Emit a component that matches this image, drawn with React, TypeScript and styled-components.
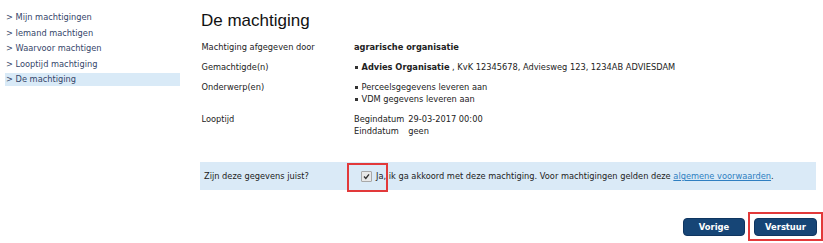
import React from 'react';
import styled, { createGlobalStyle } from 'styled-components';

const GlobalStyle = createGlobalStyle`
  html, body {
    margin: 0;
    padding: 0;
    background: #ffffff;
  }
  body {
    font-family: 'DejaVu Sans', Verdana, sans-serif;
    font-size: 8.25px;
    color: #222222;
  }
`;

const Page = styled.div`
  display: flex;
  width: 823px;
  height: 243px;
  overflow: hidden;
`;

const Sidebar = styled.nav`
  width: 175px;
  margin-left: 5px;
  padding-top: 11px;
  display: flex;
  flex-direction: column;
  gap: 2.5px;
`;

const NavItem = styled.a<{ $active?: boolean }>`
  display: block;
  height: 13px;
  line-height: 13px;
  padding-left: 1px;
  color: #35466a;
  text-decoration: none;
  background: ${(p) => (p.$active ? '#d9eaf7' : 'transparent')};
`;

const Main = styled.main`
  width: 616px;
  margin-left: 20px;
  padding-top: 11px;
  display: flex;
  flex-direction: column;
`;

const Title = styled.h1`
  margin: 0 0 6px 1px;
  font-family: 'Liberation Sans', Arial, sans-serif;
  font-weight: normal;
  font-size: 17px;
  line-height: 20px;
  color: #111111;
`;

const Row = styled.div`
  display: grid;
  grid-template-columns: 152.5px 1fr;
  padding: 4px 0 4px 1.5px;
  line-height: 12px;
`;

const Label = styled.div``;

const Value = styled.div``;

const Strong = styled.strong`
  font-weight: bold;
`;

const BulletList = styled.ul`
  margin: 0;
  padding: 0;
  list-style: none;
`;

const Bullet = styled.li`
  display: flex;
  align-items: center;
  &::before {
    content: '';
    width: 2.5px;
    height: 2.5px;
    background: #333333;
    margin: 1px 4px 0 1px;
    flex-shrink: 0;
  }
`;

const Period = styled.div`
  display: grid;
  grid-template-columns: auto auto;
  justify-content: start;
  column-gap: 4px;
`;

const ConfirmBand = styled.div`
  position: relative;
  margin-top: 21px;
  height: 28px;
  display: flex;
  align-items: center;
  padding: 0 4px;
  background: #daeaf7;
`;

const BandLabel = styled.div`
  width: 150px;
`;

const CheckLabel = styled.label`
  display: flex;
  align-items: center;
  margin-left: 7px;
`;

const CheckBox = styled.span`
  width: 9px;
  height: 9px;
  border: 1px solid #a8a8a8;
  border-radius: 1px;
  background: #e8e8e8;
  display: flex;
  align-items: center;
  justify-content: center;
  margin-right: 4px;
`;

const Link = styled.a`
  color: #2f7fc1;
  text-decoration: underline;
`;

const Highlight = styled.span<{ $left: number; $top: number; $w: number; $h: number }>`
  position: absolute;
  left: ${(p) => p.$left}px;
  top: ${(p) => p.$top}px;
  width: ${(p) => p.$w}px;
  height: ${(p) => p.$h}px;
  box-sizing: border-box;
  border: 2px solid #e2393a;
  pointer-events: none;
`;

const Actions = styled.div`
  display: flex;
  justify-content: flex-end;
  gap: 9px;
  margin-top: 28px;
  margin-right: -1px;
`;

const Button = styled.button<{ $marked?: boolean }>`
  position: relative;
  width: ${(p) => (p.$marked ? 63 : 62)}px;
  height: 18px;
  padding: 0;
  border: 1px solid #0f3560;
  border-radius: 4px;
  background: #164576;
  color: #ffffff;
  font-family: 'DejaVu Sans', Verdana, sans-serif;
  font-weight: bold;
  font-size: 8.4px;
  cursor: pointer;
  &::after {
    content: '';
    display: ${(p) => (p.$marked ? 'block' : 'none')};
    position: absolute;
    left: -7px;
    right: -7px;
    top: -7px;
    bottom: -6px;
    border: 2px solid #e2393a;
  }
`;

const navItems = [
  'Mijn machtigingen',
  'Iemand machtigen',
  'Waarvoor machtigen',
  'Looptijd machtiging',
  'De machtiging',
];

export default function App() {
  return (
    <Page>
      <GlobalStyle />
      <Sidebar>
        {navItems.map((item, i) => (
          <NavItem key={item} href="#" $active={i === navItems.length - 1}>
            &gt; {item}
          </NavItem>
        ))}
      </Sidebar>
      <Main>
        <Title>De machtiging</Title>
        <Row>
          <Label>Machtiging afgegeven door</Label>
          <Value>
            <Strong>agrarische organisatie</Strong>
          </Value>
        </Row>
        <Row>
          <Label>Gemachtigde(n)</Label>
          <Value>
            <BulletList>
              <Bullet>
                <span>
                  <Strong>Advies Organisatie</Strong> , KvK 12345678, Adviesweg 123, 1234AB ADVIESDAM
                </span>
              </Bullet>
            </BulletList>
          </Value>
        </Row>
        <Row>
          <Label>Onderwerp(en)</Label>
          <Value>
            <BulletList>
              <Bullet>Perceelsgegevens leveren aan</Bullet>
              <Bullet>VDM gegevens leveren aan</Bullet>
            </BulletList>
          </Value>
        </Row>
        <Row>
          <Label>Looptijd</Label>
          <Value>
            <Period>
              <span>Begindatum</span>
              <span>29-03-2017 00:00</span>
              <span>Einddatum</span>
              <span>geen</span>
            </Period>
          </Value>
        </Row>
        <ConfirmBand>
          <BandLabel>Zijn deze gegevens juist?</BandLabel>
          <CheckLabel>
            <CheckBox>
              <svg width="7" height="7" viewBox="0 0 7 7">
                <path d="M1 3.6 L2.8 5.4 L6 1.4" fill="none" stroke="#333" strokeWidth="1.4" />
              </svg>
            </CheckBox>
            <span>
              Ja, ik ga akkoord met deze machtiging. Voor machtigingen gelden deze{' '}
              <Link href="#">algemene voorwaarden</Link>.
            </span>
          </CheckLabel>
          <Highlight $left={147} $top={1} $w={41} $h={29} />
        </ConfirmBand>
        <Actions>
          <Button type="button">Vorige</Button>
          <Button type="button" $marked>
            Verstuur
          </Button>
        </Actions>
      </Main>
    </Page>
  );
}
